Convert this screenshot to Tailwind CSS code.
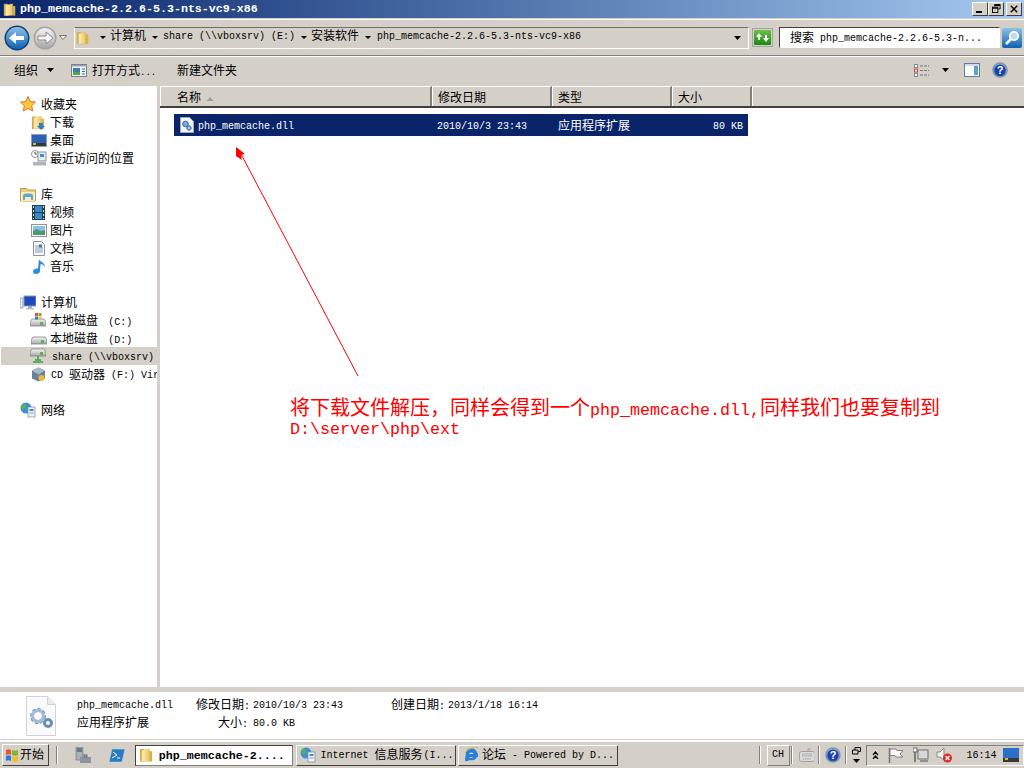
<!doctype html>
<html lang="zh-CN">
<head>
<meta charset="utf-8">
<title>php_memcache-2.2.6-5.3-nts-vc9-x86</title>
<script src="https://cdn.jsdelivr.net/npm/@tailwindcss/browser@4"></script>
</head>
<body class="w-[1024px] h-[768px] overflow-hidden bg-[#d4d0c8] text-black text-[12px] leading-[14px] font-['Liberation_Mono','Noto_Sans_CJK_SC',monospace]">
<svg width="0" height="0" class="absolute">
  <defs>
    <linearGradient id="gf" x1="0" y1="0" x2="1" y2="0"><stop offset="0" stop-color="#fff4c0"/><stop offset="1" stop-color="#eac45c"/></linearGradient>
    <linearGradient id="gb" x1="0" y1="0" x2="0" y2="1"><stop offset="0" stop-color="#8fc0ea"/><stop offset="1" stop-color="#0d62b0"/></linearGradient>
    <linearGradient id="gg" x1="0" y1="0" x2="0" y2="1"><stop offset="0" stop-color="#6cc04a"/><stop offset="1" stop-color="#1a8a10"/></linearGradient>
    <linearGradient id="gm" x1="0" y1="0" x2="0" y2="1"><stop offset="0" stop-color="#f4f4f4"/><stop offset="1" stop-color="#a8a8a8"/></linearGradient>
    <symbol id="folder" viewBox="0 0 16 16"><path d="M1 1.500h4l1 1.500v12H1z" fill="#d9ab45"/><path d="M3 3l8-1.500v13L3 15z" fill="url(#gf)" stroke="#d8b860" stroke-width=".5"/><path d="M11 4h3v11h-3z" fill="#d6b24e"/></symbol>
    <symbol id="disk" viewBox="0 0 16 16"><path d="M2 7h12l2 3v4H0v-4z" fill="url(#gm)" stroke="#6e7a80" stroke-width=".7"/><rect x="10" y="10" width="3" height="3" fill="#58b848"/></symbol>
    <symbol id="help" viewBox="0 0 16 16"><circle cx="8" cy="8" r="7.800" fill="#8a93a8"/><circle cx="8" cy="8" r="6.300" fill="url(#gb)"/><circle cx="8" cy="8" r="5.500" fill="#1c3fa8"/><text x="8" y="12" text-anchor="middle" font-size="11" font-weight="700" fill="#fff" font-family="Liberation Sans">?</text></symbol>
    <symbol id="globe" viewBox="0 0 16 16"><circle cx="6" cy="6" r="5.500" fill="#3f8fd8"/><path d="M2 3c2-2 4-1 4 1S4 6 3 7 1 5 2 3zM7 6c2-1 4 0 3 2S7 10 7 6z" fill="#5cb838"/><rect x="8" y="5" width="7" height="10" fill="#eef2f4" stroke="#7d8890" stroke-width=".7"/><rect x="9.500" y="7" width="4" height="2" fill="#4a88c8"/><rect x="9.500" y="10.500" width="4" height="1" fill="#8a98a0"/></symbol>
  </defs>
</svg>

<div class="relative flex flex-col h-[768px]">
  <!-- title bar -->
  <div class="h-[18px] shrink-0 flex items-center bg-gradient-to-r from-[#0a246a] to-[#a6caf0] pl-[3px] pr-[2px]">
    <svg class="w-[14px] h-[15px]"><use href="#folder"/></svg>
    <span class="ml-[3px] text-white font-bold text-[11.67px]">php_memcache-2.2.6-5.3-nts-vc9-x86</span>
    <div class="ml-auto flex items-center">
      <div class="w-[16px] h-[14px] bg-[#d4d0c8] border border-t-white border-l-white border-r-[#404040] border-b-[#404040] relative"><i class="absolute left-[3px] bottom-[2px] w-[6px] h-[2px] bg-black"></i></div>
      <div class="w-[16px] h-[14px] bg-[#d4d0c8] border border-t-white border-l-white border-r-[#404040] border-b-[#404040] relative"><svg viewBox="0 0 10 10" class="absolute left-[3px] top-[1px] w-[9px] h-[9px]" fill="none" stroke="#000"><path d="M3 2.500V.5h6v5H7"/><path d="M3 1.500h6" stroke-width="1.500"/><rect x=".5" y="3.500" width="6" height="6"/><path d="M.5 4.500h6" stroke-width="1.500"/></svg></div>
      <div class="ml-[2px] w-[16px] h-[14px] bg-[#d4d0c8] border border-t-white border-l-white border-r-[#404040] border-b-[#404040] relative"><svg viewBox="0 0 10 10" class="absolute left-[3px] top-[2px] w-[8px] h-[8px]" stroke="#000" stroke-width="1.800"><path d="M1 1l8 8M9 1l-8 8"/></svg></div>
    </div>
  </div>

  <!-- address bar -->
  <div class="h-[37px] shrink-0 flex items-center mt-[1px] border-y border-t-white border-b-[#808080] pl-[4px] pr-[2px] shadow-[0_1px_0_#fff]">
    <svg viewBox="0 0 26 26" class="w-[26px] h-[26px]"><circle cx="13" cy="13" r="12.500" fill="#12406e"/><circle cx="13" cy="13" r="11" fill="url(#gb)"/><path d="M5 13l7-6v4h8v4h-8v4z" fill="#fff"/></svg>
    <svg viewBox="0 0 24 24" class="ml-[3px] w-[24px] h-[24px]"><circle cx="12" cy="12" r="11.500" fill="#a4a4a4"/><circle cx="12" cy="12" r="10" fill="url(#gm)"/><path d="M20 12l-7-6v4H5v4h8v4z" fill="#f4f4f4" stroke="#8c8c8c"/></svg>
    <svg viewBox="0 0 8 5" class="ml-[2px] w-[8px] h-[5px]"><path d="M.5.500h7L4 4.500z" fill="#f0f0f0" stroke="#777"/></svg>
    <!-- breadcrumb -->
    <div class="ml-[7px] w-[675px] h-[22px] flex items-center border border-t-[#707070] border-l-white border-r-white border-b-white pl-[1px] [&>span]:-translate-y-[1px]">
      <svg class="w-[14px] h-[16px]"><use href="#folder"/></svg>
      <svg viewBox="0 0 6 3" class="ml-[10px] w-[6px] h-[3px]"><path d="M0 0h6L3 3z"/></svg>
      <span class="ml-[4px]">计算机</span>
      <svg viewBox="0 0 6 3" class="ml-[6px] w-[6px] h-[3px]"><path d="M0 0h6L3 3z"/></svg>
      <span class="ml-[5px] text-[10px]">share (\\vboxsrv) (E:)</span>
      <svg viewBox="0 0 6 3" class="ml-[6px] w-[6px] h-[3px]"><path d="M0 0h6L3 3z"/></svg>
      <span class="ml-[4px]">安装软件</span>
      <svg viewBox="0 0 6 3" class="ml-[6px] w-[6px] h-[3px]"><path d="M0 0h6L3 3z"/></svg>
      <span class="ml-[6px] text-[10px]">php_memcache-2.2.6-5.3-nts-vc9-x86</span>
      <svg viewBox="0 0 7 4" class="ml-auto mr-[7px] w-[7px] h-[4px]"><path d="M0 0h7L3.500 4z"/></svg>
    </div>
    <div class="ml-[3px] w-[21px] h-[19px] border border-[#a4a4a4] bg-[#d4d0c8] p-[1px]">
      <svg viewBox="0 0 17 15" class="w-[17px] h-[15px]"><rect width="17" height="15" rx="1" fill="url(#gg)"/><path d="M5 3L2 7h2v3h2V7h2zM12 12l3-4h-2V5h-2v3H9z" fill="#fff"/></svg>
    </div>
    <!-- search -->
    <div class="ml-[6px] w-[221px] h-[21px] flex items-center bg-white border border-t-[#404040] border-l-[#404040] border-r-white border-b-white pl-[10px] [&>span]:translate-y-[1px]">
      <span>搜索</span><span class="ml-[6px] text-[10px]">php_memcache-2.2.6-5.3-n...</span>
    </div>
    <svg viewBox="0 0 20 20" class="ml-[2px] w-[20px] h-[20px]"><rect width="20" height="20" rx="2" fill="url(#gb)"/><circle cx="12" cy="8" r="4.200" fill="#bcdcf4" stroke="#fff" stroke-width="1.800"/><path d="M9 11l-5 5" stroke="#fff" stroke-width="2.500"/></svg>
  </div>

  <!-- toolbar -->
  <div class="h-[30px] shrink-0 flex items-center pb-[2px] [&>span]:translate-y-[2px]">
    <span class="ml-[14px]">组织</span>
    <svg viewBox="0 0 7 4" class="ml-[9px] w-[7px] h-[4px]"><path d="M0 0h7L3.500 4z"/></svg>
    <svg viewBox="0 0 16 13" class="ml-[17px] w-[16px] h-[13px]"><rect x=".5" y=".5" width="15" height="12" fill="#f0f2f4" stroke="#77808a"/><path d="M.5 1h15v1.500H.5z" fill="#9aa4ae"/><rect x="2" y="4" width="7" height="7" fill="#3f7ca8"/><path d="M2 8h7v3H2z" fill="#5fa04c"/><path d="M11 5h3M11 7.500h3M11 10h3" stroke="#3f6e98"/></svg>
    <span class="ml-[5px] w-[64px] whitespace-nowrap">打开方式<span class="text-[9px]">...</span></span>
    <span class="ml-[21px]">新建文件夹</span>
    <svg viewBox="0 0 15 13" class="ml-[677px] w-[15px] h-[13px]"><rect x=".5" y=".5" width="3" height="3" fill="#fff" stroke="#7d8d9d"/><rect x=".5" y="5" width="3" height="3" fill="#f8e8e8" stroke="#c04848"/><rect x=".5" y="9.500" width="3" height="3" fill="#fff" stroke="#7d8d9d"/><path d="M6 2h9M6 6.500h9M6 11h9" stroke="#6d7d8d" stroke-dasharray="3 1"/></svg>
    <svg viewBox="0 0 7 4" class="ml-[13px] w-[7px] h-[4px]"><path d="M0 0h7L3.500 4z"/></svg>
    <svg viewBox="0 0 16 14" class="ml-[15px] w-[16px] h-[14px]"><rect x=".5" y=".5" width="15" height="13" fill="#fff" stroke="#5e7e9e"/><rect x="10" y="2" width="4" height="10" fill="#5aa0d0"/><rect x="1" y="1" width="14" height="2" fill="#c8dcec"/></svg>
    <svg class="ml-[12px] w-[16px] h-[16px]"><use href="#help"/></svg>
  </div>

  <!-- main -->
  <div class="relative flex-1 min-h-0 flex bg-white">
    <!-- nav -->
    <div class="w-[157px] shrink-0 pt-[9px] pl-[1px] flex flex-col [&>div>span]:translate-y-[2px]">
      <div class="h-[18px] flex items-center pl-[19px]"><svg viewBox="0 0 16 16" class="w-[16px] h-[16px]"><path d="M8 .5l2.300 5 5.200.6-3.800 3.600 1 5.300L8 12.400 3.300 15l1-5.300L.5 6.100l5.200-.6z" fill="#fbc83c" stroke="#e0702b"/></svg><span class="ml-[5px]">收藏夹</span></div>
      <div class="h-[18px] flex items-center pl-[30px]"><svg viewBox="0 0 15 15" class="w-[15px] h-[15px]"><use href="#folder"/><path d="M8 8h4v3h2l-4 4-4-4h2z" fill="#2a80c8"/></svg><span class="ml-[4px]">下载</span></div>
      <div class="h-[18px] flex items-center pl-[30px]"><svg viewBox="0 0 16 13" class="w-[16px] h-[13px]"><rect x=".5" y=".5" width="15" height="12" fill="#2a62b8" stroke="#8aa0b8"/><rect x="1" y="9" width="14" height="3" fill="#383838"/><rect x="2" y="9" width="3" height="2" fill="#e0b040"/></svg><span class="ml-[3px]">桌面</span></div>
      <div class="h-[18px] flex items-center pl-[30px]"><svg viewBox="0 0 16 16" class="w-[16px] h-[16px]"><circle cx="4" cy="4" r="3.500" fill="#fff" stroke="#8a9298"/><path d="M4 2v2h2" stroke="#4a4a4a" fill="none"/><rect x="7" y="2" width="8" height="9" fill="#e6ecf0" stroke="#8a9298"/><rect x="9" y="4" width="4" height="3" fill="#3e8cd0"/><rect x="2" y="12" width="13" height="3.500" fill="#b0b4b8"/></svg><span class="ml-[3px]">最近访问的位置</span></div>
      <div class="h-[18px]"></div>
      <div class="h-[18px] flex items-center pl-[19px]"><svg viewBox="0 0 16 15" class="w-[16px] h-[15px]"><path d="M.5 3V1.500h6l1 1.500h8v11H.5z" fill="#e8cf80" stroke="#b89a48"/><path d="M1 5h14v9H1z" fill="#fbeeb8"/><path d="M3 13V8.500C3 7 4.500 6.500 8 6.500s5 .5 5 2V13h-2v-3H5v3z" fill="#5ea6d8"/></svg><span class="ml-[5px]">库</span></div>
      <div class="h-[18px] flex items-center pl-[31px]"><svg viewBox="0 0 13 15" class="w-[13px] h-[15px]"><rect width="13" height="15" fill="#24404a"/><rect x="3" y="1" width="7" height="6" fill="#3a88c8"/><rect x="3" y="8" width="7" height="6" fill="#3a88c8"/><path d="M1 1h1v2H1zM1 5h1v2H1zM1 9h1v2H1zM1 13h1v1H1zM11 1h1v2h-1zM11 5h1v2h-1zM11 9h1v2h-1zM11 13h1v1h-1z" fill="#c8e8b8"/></svg><span class="ml-[5px]">视频</span></div>
      <div class="h-[18px] flex items-center pl-[30px]"><svg viewBox="0 0 16 13" class="w-[16px] h-[13px]"><rect x=".5" y=".5" width="15" height="12" fill="#fff" stroke="#8f9498"/><rect x="2" y="2" width="12" height="5" fill="#8cc0e8"/><path d="M2 7l4-2 4 2 4-1v5H2z" fill="#4c9a70"/></svg><span class="ml-[3px]">图片</span></div>
      <div class="h-[18px] flex items-center pl-[32px]"><svg viewBox="0 0 12 15" class="w-[12px] h-[15px]"><path d="M.5.500h8l3 3v11H.5z" fill="#f4f6f8" stroke="#8e98a2"/><path d="M2 5h4M2 7h8M2 9h8M2 11h8" stroke="#8aa0b8"/><rect x="6" y="3.500" width="3" height="3" fill="#3a7ab8"/></svg><span class="ml-[5px]">文档</span></div>
      <div class="h-[18px] flex items-center pl-[32px]"><svg viewBox="0 0 13 16" class="w-[13px] h-[16px]"><path d="M6 1c.5 3 6 3 6 8-1-2-3-3-4.500-3L7 13c0 2-2 3-4 3s-3-1-3-2.500S2 10 5 10.500z" fill="#2a8ed8"/></svg><span class="ml-[4px]">音乐</span></div>
      <div class="h-[18px]"></div>
      <div class="h-[18px] flex items-center pl-[19px]"><svg viewBox="0 0 16 15" class="w-[16px] h-[15px]"><rect x="0" y="3" width="3" height="10" fill="#e4e8ec" stroke="#6a7a8a" stroke-width=".6"/><rect x="4" y="1" width="12" height="10" fill="#1d48c0" stroke="#8898a8"/><rect x="8" y="11" width="4" height="2" fill="#a0a8b0"/><rect x="6" y="13" width="8" height="1.500" fill="#b8c0c8"/></svg><span class="ml-[5px]">计算机</span></div>
      <div class="h-[18px] flex items-center pl-[29px]"><svg viewBox="0 0 16 16" class="w-[16px] h-[16px]"><use href="#disk"/><rect x="5" y="1" width="3" height="3" fill="#e85030"/><rect x="8.500" y="1" width="3" height="3" fill="#68b838"/><rect x="5" y="4.500" width="3" height="3" fill="#3878d8"/><rect x="8.500" y="4.500" width="3" height="3" fill="#f0c030"/></svg><span class="ml-[4px]">本地磁盘 <span class="ml-[3px] text-[10px]">(C:)</span></span></div>
      <div class="h-[18px] flex items-center pl-[30px]"><svg class="w-[16px] h-[16px]"><use href="#disk"/></svg><span class="ml-[3px]">本地磁盘 <span class="ml-[3px] text-[10px]">(D:)</span></span></div>
      <div class="h-[18px] flex items-center pl-[29px] bg-[#d4d0c8]"><svg viewBox="0 0 16 16" class="w-[16px] h-[16px]"><path d="M2 1h12l2 3v4H0V4z" fill="url(#gm)" stroke="#6e7a80" stroke-width=".7"/><rect x="10" y="4" width="3" height="3" fill="#58b848"/><path d="M8 8v4M3 14h10M5 12h6" stroke="#3aa040" stroke-width="1.500"/></svg><span class="ml-[6px] text-[10px]">share (\\vboxsrv)</span></div>
      <div class="h-[18px] flex items-center pl-[30px] overflow-hidden whitespace-nowrap"><svg viewBox="0 0 15 15" class="w-[15px] h-[15px] shrink-0"><path d="M7.500.5l6.500 3v8l-6.500 3L1 11.500v-8z" fill="#6c8098"/><path d="M7.500 7.500L1 3.500l6.500-3 6.500 3z" fill="#a8b8c8"/><circle cx="10.500" cy="11" r="3" fill="#f0b838"/></svg><span class="ml-[5px] text-[10px]">CD </span><span class="ml-[6px]">驱动器</span><span class="ml-[6px] text-[10px]">(F:) Vir</span></div>
      <div class="h-[18px]"></div>
      <div class="h-[18px] flex items-center pl-[19px]"><svg class="w-[16px] h-[16px]"><use href="#globe"/></svg><span class="ml-[5px]">网络</span></div>
    </div>
    <!-- splitter -->
    <div class="w-[3px] shrink-0 bg-[#d4d0c8]"></div>
    <!-- content -->
    <div class="flex-1 min-w-0 flex flex-col">
      <div class="h-[22px] shrink-0 flex border-b-[2px] border-b-[#404040]">
        <div class="w-[272px] flex items-center pl-[16px] pt-[4px] bg-[#d4d0c8] border-t border-l border-t-white border-l-white border-r-[2px] border-r-[#808080]"><span>名称</span><svg viewBox="0 0 7 4" class="ml-[5px] w-[8px] h-[4px]"><path d="M3.500 0L7 4H0z" fill="#a0a0a0"/></svg></div>
        <div class="w-[120px] flex items-center pl-[5px] pt-[4px] bg-[#d4d0c8] border-t border-l border-t-white border-l-white border-r-[2px] border-r-[#808080]">修改日期</div>
        <div class="w-[120px] flex items-center pl-[5px] pt-[4px] bg-[#d4d0c8] border-t border-l border-t-white border-l-white border-r-[2px] border-r-[#808080]">类型</div>
        <div class="w-[80px] flex items-center pl-[5px] pt-[4px] bg-[#d4d0c8] border-t border-l border-t-white border-l-white border-r-[2px] border-r-[#808080]">大小</div>
        <div class="flex-1 bg-[#d4d0c8] border-t border-l border-t-white border-l-white"></div>
      </div>
      <div class="ml-[14px] mt-[6px] w-[574px] h-[22px] flex items-center bg-[#0a246a] text-white [&>span]:translate-y-[2px]">
        <svg viewBox="0 0 14 16" class="ml-[6px] w-[14px] h-[16px]"><path d="M.5.500h9l4 4v11H.5z" fill="#f2f4f6" stroke="#a0a8b0"/><circle cx="5.500" cy="7" r="2.800" fill="#7ea8d8" stroke="#3868a8"/><circle cx="9" cy="11" r="2.200" fill="#9abbe0" stroke="#3868a8"/></svg>
        <span class="ml-[4px] w-[239px] text-[10px]">php_memcache.dll</span>
        <span class="w-[121px] text-[10px]">2010/10/3 23:43</span>
        <span class="w-[155px]">应用程序扩展</span>
        <span class="text-[10px]">80 KB</span>
      </div>
    </div>

    <!-- annotation overlay -->
    <svg class="absolute left-0 top-0 w-[1024px] h-[601px] pointer-events-none" viewBox="0 86 1024 601"><path d="M358 376L241 154" stroke="#ff0000" fill="none"/><path d="M236 147l9 7-4 1 1 5-6-4z" fill="#ff0000"/></svg>
    <div class="absolute left-[290px] top-[313px] w-[660px] text-[#ff0000] text-[20px] leading-[21px]">
      <div class="h-[20px] whitespace-nowrap">将下载文件解压，同样会得到一个<span class="text-[16.67px]">php_memcache.dll,</span>同样我们也要复制到</div>
      <div class="h-[21px] text-[16.67px]">D:\server\php\ext</div>
    </div>
  </div>

  <!-- details -->
  <div class="h-[48px] shrink-0 mt-[5px] bg-white flex items-center">
    <svg viewBox="0 0 30 40" class="ml-[26px] w-[30px] h-[40px] shrink-0"><path d="M.5.500h21l8 8v31H.5z" fill="#fafafa" stroke="#d0d4d8"/><path d="M21.500.5v8h8" fill="#e8ecf0" stroke="#d0d4d8"/><circle cx="12" cy="20" r="6" fill="none" stroke="#7c9cc0" stroke-width="4" stroke-dasharray="3 1.500"/><circle cx="12" cy="20" r="5.500" fill="none" stroke="#a4bcd4" stroke-width="3"/><circle cx="22" cy="27" r="3.500" fill="none" stroke="#6e8eb0" stroke-width="3"/></svg>
    <div class="ml-[21px] mb-[2px] grid grid-cols-[119px_57px_138px_57px_auto] grid-rows-[18px_18px] items-center whitespace-nowrap">
      <span class="text-[10px]">php_memcache.dll</span><span>修改日期<span class="text-[10px]">:</span></span><span class="text-[10px]">2010/10/3 23:43</span><span>创建日期<span class="text-[10px]">:</span></span><span class="text-[10px]">2013/1/18 16:14</span>
      <span>应用程序扩展</span><span class="pl-[22px]">大小<span class="text-[10px]">:</span></span><span class="text-[10px]">80.0 KB</span><span></span><span></span>
    </div>
  </div>

  <!-- taskbar -->
  <div class="h-[28px] shrink-0 border-t-[2px] border-t-white shadow-[0_-1px_0_#d4d0c8] flex items-center">
    <div class="ml-[2px] w-[47px] h-[22px] flex items-center border border-t-white border-l-white border-r-[#404040] border-b-[#404040] [&>span]:translate-y-[1px]">
      <svg viewBox="0 0 14 14" class="ml-[2px] w-[14px] h-[14px]"><path d="M1 2c2-1 3-1 5 0v5C4 6 3 6 1 7z" fill="#e8562c"/><path d="M7 2c2 1 4 1 6 0v5c-2 1-4 1-6 0z" fill="#7ab82c"/><path d="M1 8c2-1 3-1 5 0v5c-2-1-3-1-5 0z" fill="#2c7ae0"/><path d="M7 8c2 1 4 1 6 0v5c-2 1-4 1-6 0z" fill="#f0c020"/></svg>
      <span class="ml-[1px]">开始</span>
    </div>
    <div class="ml-[7px] w-[2px] h-[18px] bg-white border-l border-l-[#808080]"></div>
    <svg viewBox="0 0 16 17" class="ml-[17px] w-[16px] h-[17px]"><rect x="1" y="0" width="7" height="13" fill="#a8b0b8" stroke="#687078" stroke-width=".6"/><path d="M2 2h5M2 4h5" stroke="#30404e"/><rect x="5" y="10" width="11" height="6" fill="#8c949c"/><rect x="9" y="8" width="3" height="2" fill="none" stroke="#59626a"/></svg>
    <svg viewBox="0 0 16 15" class="ml-[18px] w-[16px] h-[15px]"><path d="M3 1h13l-3 13H0z" fill="#2a7ac0" stroke="#bcd4ec" stroke-width=".6"/><path d="M4 4l4 3-5 3M8 10h3" stroke="#fff" fill="none"/></svg>
    <div class="ml-[10px] w-[159px] h-[21px] flex items-center bg-white border border-t-[#404040] border-l-[#404040] border-r-[#808080] border-b-[#808080] [&>span]:translate-y-[1px]">
      <svg class="ml-[3px] w-[15px] h-[16px]"><use href="#folder"/></svg>
      <span class="ml-[5px] font-bold text-[11.67px]">php_memcache-2....</span>
    </div>
    <div class="ml-[3px] w-[160px] h-[21px] flex items-center border border-t-white border-l-white border-r-[#404040] border-b-[#404040] [&>span]:translate-y-[1px]">
      <svg class="ml-[3px] w-[16px] h-[16px]"><use href="#globe"/></svg>
      <span class="ml-[4px] text-[10px]">Internet </span><span class="ml-[6px]">信息服务</span><span class="ml-[1px] text-[10px]">(I...</span>
    </div>
    <div class="ml-[2px] w-[160px] h-[21px] flex items-center border border-t-white border-l-white border-r-[#404040] border-b-[#404040] [&>span]:translate-y-[1px]">
      <svg viewBox="0 0 16 16" class="ml-[4px] w-[16px] h-[16px]"><path d="M14 5.500A6 6 0 0 0 3 4.500C3 8 2 11 2 13c0 2 3 1 5 0a6 6 0 0 0 7-3H10a2.500 2.500 0 0 1-4 0h9c.4-3-.5-4-1-4.500zM6 7a2.500 2.500 0 0 1 4.500 0z" fill="#2a80d8"/><path d="M2 6C6 1 13-1 15 1" fill="none" stroke="#e8b030"/></svg>
      <span class="ml-[3px]">论坛</span><span class="ml-[6px] text-[10px]">- Powered by D...</span>
    </div>
    <div class="ml-[141px] w-[2px] h-[18px] bg-white border-l border-l-[#808080]"></div>
    <div class="ml-[6px] w-[23px] h-[21px] flex items-center justify-center border border-t-white border-l-white border-r-[#808080] border-b-[#808080] text-[10px]">CH</div>
    <div class="ml-[1px] w-[2px] h-[18px] bg-white border-l border-l-[#808080]"></div>
    <svg viewBox="0 0 16 14" class="ml-[6px] w-[16px] h-[14px]"><path d="M9 3V1h3" stroke="#a0a0a0" fill="none"/><rect x=".5" y="3.500" width="15" height="10" rx="2" fill="#dcdcdc" stroke="#a0a0a0"/><path d="M3 6h10M3 8h10M4 11h8" stroke="#9a9a9a" stroke-dasharray="1.500 .6"/></svg>
    <div class="ml-[4px] w-[2px] h-[18px] bg-white border-l border-l-[#808080]"></div>
    <svg class="ml-[5px] w-[16px] h-[16px]"><use href="#help"/></svg>
    <div class="ml-[4px] w-[2px] h-[18px] bg-white border-l border-l-[#808080]"></div>
    <svg viewBox="0 0 9 17" class="ml-[5px] w-[9px] h-[17px]"><path d="M3 3V.5h5.500v4H6.500M.5 3h5.500v4H.5z" fill="none" stroke="#000"/><path d="M1 12h7l-3.500 4z"/></svg>
    <!-- tray -->
    <div class="ml-[5px] w-[158px] h-[21px] flex items-center border border-t-[#808080] border-l-[#808080] border-r-white border-b-white [&>span]:translate-y-[1px]">
      <svg viewBox="0 0 7 8" class="ml-[5px] w-[7px] h-[8px]" fill="none" stroke="#000" stroke-width="1.200"><path d="M1 4l2.500-3L6 4M1 8l2.500-3L6 8"/></svg>
      <svg viewBox="0 0 16 16" class="ml-[9px] w-[16px] h-[16px]"><path d="M1.500 1v15" stroke="#707070" stroke-width="1.500"/><path d="M2 2h6l1 1.500h6L12 7l3 3H8L7 8.500H2z" fill="#fafafa" stroke="#808080"/></svg>
      <svg viewBox="0 0 16 16" class="ml-[9px] w-[16px] h-[16px]"><rect x="0" y="1" width="4" height="4" fill="#fff" stroke="#606060"/><path d="M2 5v10" stroke="#606060" stroke-width="1.500"/><rect x="5" y="3" width="10" height="9" fill="#d8d8d8" stroke="#707070"/><rect x="7" y="13" width="8" height="2" fill="#8e8e8e"/></svg>
      <svg viewBox="0 0 16 16" class="ml-[7px] w-[16px] h-[16px]"><path d="M1 5h3l4-4v12L4 10H1z" fill="#f0f0f0" stroke="#8a8a8a"/><circle cx="11.500" cy="11" r="4.500" fill="#e02828"/><path d="M9.500 9l4 4M13.500 9l-4 4" stroke="#fff" stroke-width="1.300"/></svg>
      <span class="ml-[14px] text-[10px]">16:14</span>
      <svg viewBox="0 0 16 14" class="ml-[7px] w-[16px] h-[14px]"><rect width="16" height="14" fill="#2a70c8"/><rect y="10" width="16" height="4" fill="#383838"/><rect x="2" y="10" width="3" height="2" fill="#e0b040"/></svg>
    </div>
  </div>
</div>
</body>
</html>
